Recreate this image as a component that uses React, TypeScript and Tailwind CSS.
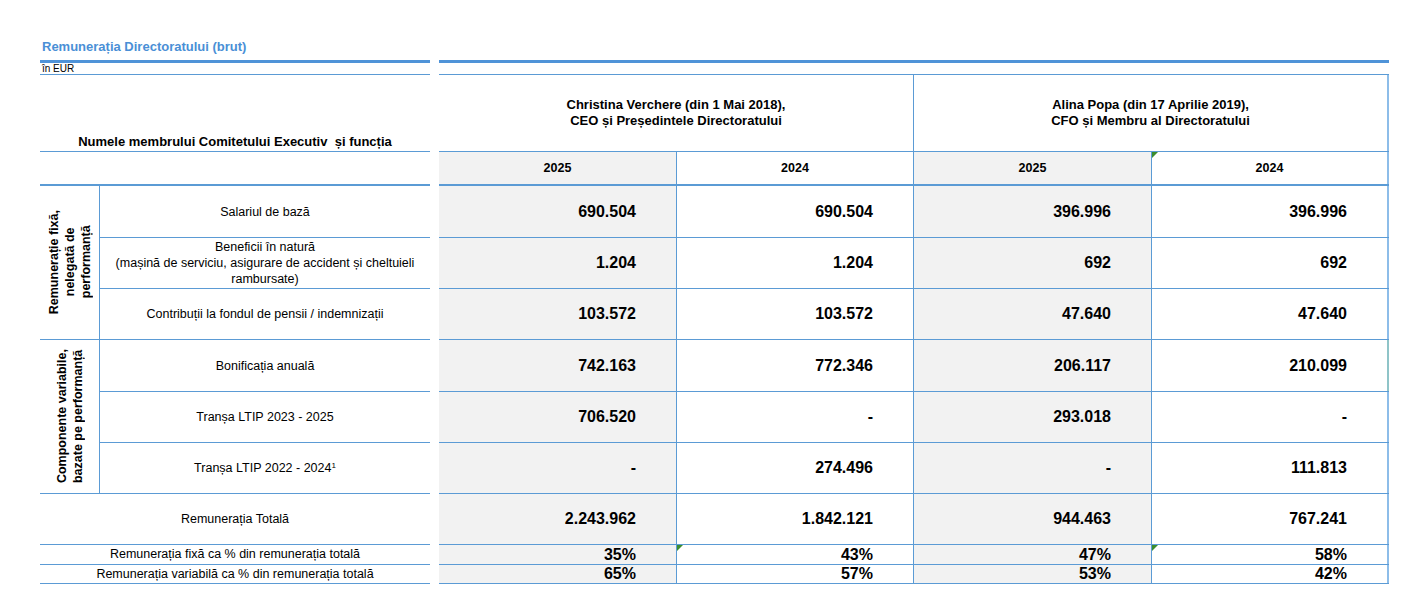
import React from "react";

const line = "border-[#5b9bd5]";

type Row = {
  label: React.ReactNode;
  values: string[];
  h: string;
};

const fixedRows: Row[] = [
  { label: "Salariul de bază", values: ["690.504", "690.504", "396.996", "396.996"], h: "h-[52px]" },
  {
    label: (
      <>
        Beneficii în natură
        <br />
        (mașină de serviciu, asigurare de accident și cheltuieli
        <br />
        rambursate)
      </>
    ),
    values: ["1.204", "1.204", "692", "692"],
    h: "h-[51px]",
  },
  { label: "Contribuții la fondul de pensii / indemnizații", values: ["103.572", "103.572", "47.640", "47.640"], h: "h-[50px]" },
];

const variableRows: Row[] = [
  { label: "Bonificația anuală", values: ["742.163", "772.346", "206.117", "210.099"], h: "h-[52px]" },
  { label: "Tranșa LTIP 2023 - 2025", values: ["706.520", "-", "293.018", "-"], h: "h-[51px]" },
  {
    label: (
      <>
        Tranșa LTIP 2022 - 2024<sup className="text-[8px]">1</sup>
      </>
    ),
    values: ["-", "274.496", "-", "111.813"],
    h: "h-[50px]",
  },
];

function Flag() {
  return (
    <span className="absolute top-0 left-0 w-0 h-0 border-t-[6px] border-t-[#3c8d2f] border-r-[6px] border-r-transparent" />
  );
}

function cellClass(i: number) {
  if (i === 3) return "w-[237px] border-r-2 border-r-[#8dbde9] bg-white";
  if (i === 1) return `w-[237px] border-r ${line} bg-white`;
  return `w-[238px] border-r ${line} bg-[#f2f2f2]`;
}

function RightRow({ values, h, flags = [], greenEdge }: { values: string[]; h: string; flags?: number[]; greenEdge?: boolean }) {
  return (
    <div className={`flex ${h} border-b ${line}`}>
      {values.map((v, i) => (
        <div
          key={i}
          className={`relative flex items-center justify-end pr-[40px] ${cellClass(i)} ${
            greenEdge && i === 3 ? "border-r-[#8fc4c8]" : ""
          }`}
        >
          {flags.includes(i) && <Flag />}
          <span className="text-[16px] font-bold leading-none">{v}</span>
        </div>
      ))}
    </div>
  );
}

function LeftGroup({ title, rows }: { title: React.ReactNode; rows: Row[] }) {
  return (
    <div className={`flex border-b ${line}`}>
      <div className={`w-[60px] border-r ${line} flex items-center justify-center`}>
        <div className="[writing-mode:vertical-rl] rotate-180 text-center text-[12.5px] font-bold leading-[16px]">
          {title}
        </div>
      </div>
      <div className="flex-1">
        {rows.map((r, i) => (
          <div
            key={i}
            className={`${r.h} flex items-center justify-center text-center text-[12.5px] leading-[16px] ${
              i < rows.length - 1 ? "border-b " + line : ""
            }`}
          >
            <div>{r.label}</div>
          </div>
        ))}
      </div>
    </div>
  );
}

export default function App() {
  return (
    <div className="w-[1420px] h-[612px] bg-white text-black pl-[40px] pt-[39px]" style={{ fontFamily: '"Liberation Sans", Arial, sans-serif' }}>
      <div className="h-[21px] pl-[2px] text-[13px] leading-[16px] font-bold text-[#4a8fd6]">
        Remunerația Directoratului (brut)
      </div>

      <div className="flex gap-[9px]">
        {/* left block */}
        <div className="w-[390px]">
          <div className="h-[15px] border-t-[3px] border-t-[#4f93d8] border-b border-b-[#5b9bd5] pl-[2px] text-[10px] leading-[11px]">
            în EUR
          </div>
          <div className={`h-[77px] border-b ${line} flex items-end justify-center`}>
            <div className="text-[13px] font-bold leading-[16px] whitespace-pre pb-[1px]">
              Numele membrului Comitetului Executiv  și funcția
            </div>
          </div>
          <div className={`h-[34px] border-b-2 ${line}`} />
          <LeftGroup
            title={
              <>
                Remunerație fixă,
                <br />
                nelegată de
                <br />
                performanță
              </>
            }
            rows={fixedRows}
          />
          <LeftGroup
            title={
              <>
                Componente variabile,
                <br />
                bazate pe performanță
              </>
            }
            rows={variableRows}
          />
          <div className={`h-[51px] border-b ${line} flex items-center justify-center text-[12.5px]`}>
            Remunerația Totală
          </div>
          <div className={`h-[20px] border-b ${line} flex items-center justify-center text-[12.5px] leading-none`}>
            Remunerația fixă ca % din remunerația totală
          </div>
          <div className={`h-[19px] border-b ${line} flex items-center justify-center text-[12.5px] leading-none`}>
            Remunerația variabilă ca % din remunerația totală
          </div>
        </div>

        {/* right block */}
        <div className="w-[950px]">
          <div className="h-[15px] border-t-[3px] border-t-[#4f93d8] border-b border-b-[#5b9bd5]" />
          <div className={`h-[77px] border-b ${line} flex`}>
            <div className={`w-[475px] border-r ${line} flex items-center justify-center text-center text-[13px] font-bold leading-[16px]`}>
              <div>
                Christina Verchere (din 1 Mai 2018),
                <br />
                CEO și Președintele Directoratului
              </div>
            </div>
            <div className="w-[475px] border-r-2 border-r-[#8dbde9] flex items-center justify-center text-center text-[13px] font-bold leading-[16px]">
              <div>
                Alina Popa (din 17 Aprilie 2019),
                <br />
                CFO și Membru al Directoratului
              </div>
            </div>
          </div>
          <div className={`h-[34px] border-b-2 ${line} flex`}>
            {["2025", "2024", "2025", "2024"].map((y, i) => (
              <div key={i} className={`relative flex items-center justify-center text-[12.5px] font-bold ${cellClass(i)}`}>
                {i === 3 && <Flag />}
                {y}
              </div>
            ))}
          </div>
          <RightRow values={fixedRows[0].values} h="h-[52px]" />
          <RightRow values={fixedRows[1].values} h="h-[51px]" />
          <RightRow values={fixedRows[2].values} h="h-[51px]" />
          <RightRow values={variableRows[0].values} h="h-[52px]" greenEdge />
          <RightRow values={variableRows[1].values} h="h-[51px]" />
          <RightRow values={variableRows[2].values} h="h-[51px]" />
          <RightRow values={["2.243.962", "1.842.121", "944.463", "767.241"]} h="h-[51px]" />
          <RightRow values={["35%", "43%", "47%", "58%"]} h="h-[20px]" flags={[1, 3]} />
          <RightRow values={["65%", "57%", "53%", "42%"]} h="h-[19px]" />
        </div>
      </div>
    </div>
  );
}
